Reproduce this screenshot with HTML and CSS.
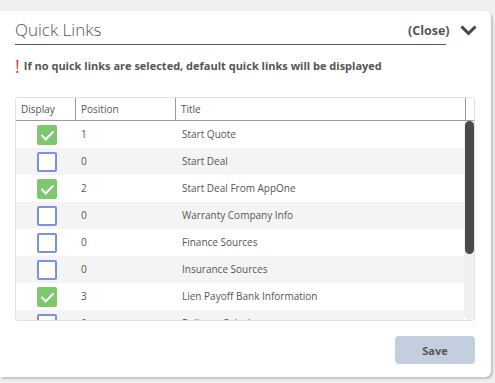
FILE: index.html
```html
<!DOCTYPE html>
<html>
<head>
<meta charset="utf-8">
<link rel="stylesheet" href="styles.css">
</head>
<body>
<div class="panel">
  <div class="head">
    <div class="title">Quick Links</div>
    <div class="close">(Close)
      <svg class="chev" width="17" height="11" viewBox="0 0 17 11"><path d="M1.5 1.5 L8.5 8.5 L15.5 1.5" fill="none" stroke="#444" stroke-width="3"/></svg>
    </div>
  </div>
  <div class="warn"><span class="bang">!</span>If no quick links are selected, default quick links will be displayed</div>
  <div class="grid">
    <div class="ghead">
      <div class="c1">Display</div>
      <div class="c2">Position</div>
      <div class="c3">Title</div>
      <div class="c4"></div>
    </div>
    <div class="gbody">
      <div class="rows">
        <div class="row"><div class="c1"><span class="cb on"></span></div><div class="c2">1</div><div class="c3">Start Quote</div></div>
        <div class="row alt"><div class="c1"><span class="cb"></span></div><div class="c2">0</div><div class="c3">Start Deal</div></div>
        <div class="row"><div class="c1"><span class="cb on"></span></div><div class="c2">2</div><div class="c3">Start Deal From AppOne</div></div>
        <div class="row alt"><div class="c1"><span class="cb"></span></div><div class="c2">0</div><div class="c3">Warranty Company Info</div></div>
        <div class="row"><div class="c1"><span class="cb"></span></div><div class="c2">0</div><div class="c3">Finance Sources</div></div>
        <div class="row alt"><div class="c1"><span class="cb"></span></div><div class="c2">0</div><div class="c3">Insurance Sources</div></div>
        <div class="row"><div class="c1"><span class="cb on"></span></div><div class="c2">3</div><div class="c3">Lien Payoff Bank Information</div></div>
        <div class="row alt"><div class="c1"><span class="cb"></span></div><div class="c2">0</div><div class="c3">Rollover Calculator</div></div>
      </div>
      <div class="track"><div class="thumb"></div></div>
    </div>
  </div>
  <div class="foot"><button class="save">Save</button></div>
</div>
</body>
</html>
```
FILE: styles.css
```css
html, body { margin: 0; padding: 0; }
body {
  background: #efefef;
  font-family: "Open Sans", "Noto Sans", sans-serif;
  color: #555;
  width: 495px;
  height: 383px;
  overflow: hidden;
}
.panel {
  margin-top: 11px;
  width: 491px;
  height: 366px;
  background: #fff;
  border-radius: 0 6px 6px 0;
  box-shadow: 2px 2px 2px #c4c4c4;
  padding: 0 16px 0 15px;
  box-sizing: border-box;
  display: flex;
  flex-direction: column;
}
.head {
  display: flex;
  align-items: flex-end;
  height: 34px;
}
.title {
  width: 431px;
  flex: none;
  border-bottom: 1px solid #555;
  font-size: 17px;
  font-weight: 300;
  color: #555;
  line-height: 24px;
  box-sizing: border-box;
  height: 34px;
  padding-top: 7px;
}
.close {
  margin-left: -38px;
  display: flex;
  align-items: center;
  font-size: 12.5px;
  font-weight: 700;
  color: #555;
  height: 34px;
  padding-top: 4px;
  box-sizing: border-box;
  white-space: nowrap;
}
.chev { margin-left: 10px; margin-top: 1px; }
.warn {
  margin-top: 12px;
  font-size: 11px;
  font-weight: 700;
  color: #555;
  display: flex;
  align-items: center;
  height: 16px;
}
.bang {
  color: #e0393e;
  font-size: 18px;
  font-weight: 400;
  margin-right: 4px;
  line-height: 16px;
  margin-top: 1px;
}
.grid {
  margin-top: 24px;
  border: 1px solid #e2e2e2;
  border-radius: 3px;
  height: 224px;
  box-sizing: border-box;
  display: flex;
  flex-direction: column;
  overflow: hidden;
}
.ghead {
  display: flex;
  height: 22px;
  border-bottom: 1px solid #9a9a9a;
  flex: none;
  font-size: 10px;
  color: #555;
}
.ghead > div {
  display: flex;
  align-items: center;
  padding-left: 5px;
  box-sizing: border-box;
  border-right: 1px solid #9a9a9a;
}
.ghead .c4 { border-right: none; }
.c1 { width: 60px; flex: none; }
.c2 { width: 100px; flex: none; }
.c3 { flex: 1; }
.c4 { width: 10px; flex: none; }
.ghead .c3 { width: 290px; flex: none; }
.gbody {
  flex: 1;
  display: flex;
  min-height: 0;
}
.rows {
  flex: 1;
  overflow: hidden;
}
.row {
  display: flex;
  height: 27px;
  align-items: center;
  font-size: 10px;
  color: #555;
  padding-bottom: 2px;
  box-sizing: border-box;
}
.row.alt { background: #f4f4f4; }
.row .c1 { display: flex; justify-content: center; padding-left: 2px; box-sizing: border-box; margin-top: 2px; }
.row .c2 { padding-left: 5px; box-sizing: border-box; }
.row .c3 { padding-left: 6px; }
.cb {
  width: 20px;
  height: 20px;
  box-sizing: border-box;
  border: 2px solid #7b93de;
  border-radius: 2px;
  background: #fff;
  display: block;
  position: relative;
}
.cb.on {
  background: #7dc86f;
  border-color: #7dc86f;
}
.cb.on::after {
  content: "";
  position: absolute;
  left: 5px;
  top: 1px;
  width: 5px;
  height: 10px;
  border: solid #fff;
  border-width: 0 2.5px 2.5px 0;
  transform: rotate(45deg);
}
.track {
  width: 10px;
  flex: none;
  background: #f0f0f0;
  border-radius: 5px;
}
.thumb {
  width: 9px;
  margin-left: 0.5px;
  height: 133px;
  background: #4a4a4a;
  border-radius: 5px;
}
.foot {
  display: flex;
  justify-content: flex-end;
  margin-top: 15px;
}
.save {
  width: 80px;
  height: 28px;
  border: none;
  border-radius: 4px;
  background: #c3cfdf;
  color: #555;
  font-family: "Open Sans", "Noto Sans", sans-serif;
  font-weight: 700;
  font-size: 11px;
}
```
